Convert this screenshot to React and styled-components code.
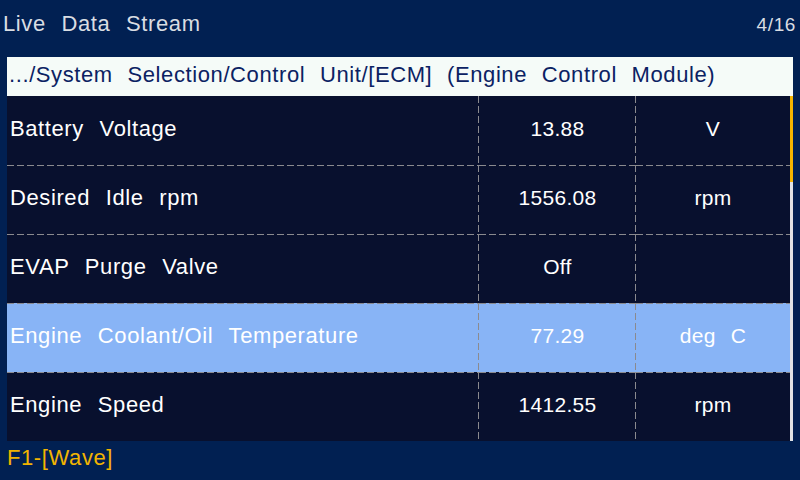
import React from "react";
import styled, { createGlobalStyle } from "styled-components";

const Global = createGlobalStyle`
  html, body { margin: 0; padding: 0; background: #012052; }
  body { font-family: "Liberation Sans", Arial, sans-serif; }
`;

const Screen = styled.div`
  width: 800px;
  height: 480px;
  background: #012052;
  display: flex;
  flex-direction: column;
  overflow: hidden;
`;

const TitleBar = styled.div`
  height: 57px;
  box-sizing: border-box;
  padding: 11px 4px 0 3px;
  display: flex;
  justify-content: space-between;
  align-items: flex-start;
  color: #d9dde2;
`;

const Title = styled.div`
  font-size: 22px;
  line-height: 25px;
  letter-spacing: 0.6px;
  word-spacing: 9px;
`;

const PageNum = styled.div`
  font-size: 19px;
  line-height: 25px;
  padding-top: 1px;
  letter-spacing: 0.6px;
`;

const Panel = styled.div`
  margin-left: 7px;
  width: 786px;
  display: flex;
  flex-direction: column;
`;

const PathBar = styled.div`
  height: 39px;
  background: #f5fbf8;
  color: #0b2263;
  font-size: 22px;
  letter-spacing: 0.6px;
  word-spacing: 8px;
  display: flex;
  align-items: center;
  padding: 0 0 3px 2px;
  box-sizing: border-box;
  white-space: nowrap;
`;

const Body = styled.div`
  display: flex;
  height: 345px;
`;

const Table = styled.div`
  width: 783px;
  background: #08102e;
  display: grid;
  grid-template-columns: 472px 157px 154px;
  grid-auto-rows: 69px;
`;

const dashH = `repeating-linear-gradient(to right, #8a8a8f 0 7px, transparent 7px 10px)`;
const dashV = `repeating-linear-gradient(to bottom, #8a8a8f 0 7px, transparent 7px 10px)`;

const Cell = styled.div`
  display: flex;
  align-items: center;
  justify-content: ${(p) => (p.$align === "left" ? "flex-start" : "center")};
  padding: ${(p) => (p.$align === "left" ? "0 0 3px 3px" : "0 0 3px 0")};
  box-sizing: border-box;
  color: #ffffff;
  font-size: ${(p) => (p.$align === "left" ? "22px" : "21px")};
  letter-spacing: ${(p) => (p.$align === "left" ? "0.6px" : "0.3px")};
  word-spacing: 9px;
  white-space: nowrap;
  background-color: ${(p) => (p.$active ? "#88b4f6" : "transparent")};
  background-image: ${(p) =>
    [p.$first ? null : dashH, p.$divider ? dashV : null].filter(Boolean).join(", ") || "none"};
  background-size: ${(p) =>
    [p.$first ? null : "100% 1px", p.$divider ? "1px 100%" : null].filter(Boolean).join(", ") || "auto"};
  background-position: ${(p) =>
    [p.$first ? null : "left top", p.$divider ? "right top" : null].filter(Boolean).join(", ") || "0 0"};
  background-repeat: no-repeat;
`;

const Scrollbar = styled.div`
  width: 3px;
  background: #dfe3e6;
  display: flex;
  flex-direction: column;
`;

const Thumb = styled.div`
  height: 86px;
  background: #f4b400;
`;

const Footer = styled.div`
  flex: 1;
  padding: 4px 0 0 7px;
  color: #f2b400;
  font-size: 22px;
  line-height: 25px;
  letter-spacing: 0.6px;
`;

const rows = [
  { name: "Battery Voltage", value: "13.88", unit: "V" },
  { name: "Desired Idle rpm", value: "1556.08", unit: "rpm" },
  { name: "EVAP Purge Valve", value: "Off", unit: "" },
  { name: "Engine Coolant/Oil Temperature", value: "77.29", unit: "deg C", active: true },
  { name: "Engine Speed", value: "1412.55", unit: "rpm" },
];

export default function App() {
  return (
    <Screen>
      <Global />
      <TitleBar>
        <Title>Live Data Stream</Title>
        <PageNum>4/16</PageNum>
      </TitleBar>
      <Panel>
        <PathBar>.../System Selection/Control Unit/[ECM] (Engine Control Module)</PathBar>
        <Body>
          <Table>
            {rows.map((r, i) => (
              <React.Fragment key={i}>
                <Cell $align="left" $first={i === 0} $divider $active={r.active}>
                  {r.name}
                </Cell>
                <Cell $first={i === 0} $divider $active={r.active}>
                  {r.value}
                </Cell>
                <Cell $first={i === 0} $active={r.active}>
                  {r.unit}
                </Cell>
              </React.Fragment>
            ))}
          </Table>
          <Scrollbar>
            <Thumb />
          </Scrollbar>
        </Body>
      </Panel>
      <Footer>F1-[Wave]</Footer>
    </Screen>
  );
}
